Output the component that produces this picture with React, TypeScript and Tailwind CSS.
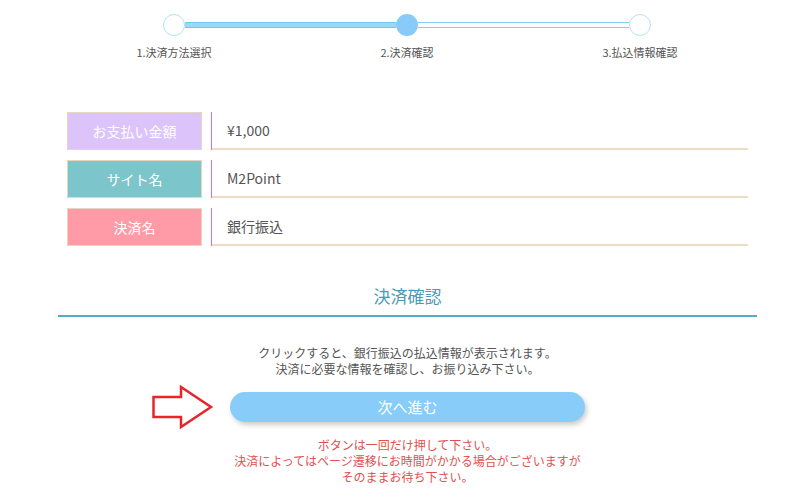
import React from 'react';

const FONT = { fontFamily: '"Noto Sans CJK JP", "Noto Sans", sans-serif' };

const ROWS = [
  { label: 'お支払い金額', value: '¥1,000', color: 'bg-[#dcc4fb]' },
  { label: 'サイト名', value: 'M2Point', color: 'bg-[#7cc5cb]' },
  { label: '決済名', value: '銀行振込', color: 'bg-[#fe9ba7]' },
];

function StepBar() {
  return (
    <div className="pt-[14px]">
      <div className="ml-[163px] flex w-[488px] items-center">
        <div className="h-[22px] w-[22px] shrink-0 rounded-full border border-[#b7e0f8] bg-white" />
        <div className="h-[6px] flex-1 border-y border-[#6ccaf2] bg-[#9ad8f8]" />
        <div className="h-[22px] w-[22px] shrink-0 rounded-full bg-[#88cbf8]" />
        <div className="h-[6px] flex-1 border-y border-[#7fd0f3] bg-white" />
        <div className="h-[22px] w-[22px] shrink-0 rounded-full border border-[#b7e0f8] bg-white" />
      </div>
      <div className="ml-[74px] mt-[9px] flex gap-[33px] text-[11px] leading-[14px] text-[#555]">
        <div className="w-[200px] text-center">1.決済方法選択</div>
        <div className="w-[200px] text-center">2.決済確認</div>
        <div className="w-[200px] text-center">3.払込情報確認</div>
      </div>
    </div>
  );
}

function Arrow() {
  return (
    <svg width="62" height="44" viewBox="0 0 62 44" className="shrink-0">
      <polygon
        points="1.5,12 29,12 29,2 59,22 29,42 29,32 1.5,32"
        fill="white"
        stroke="#e5262b"
        strokeWidth="2.5"
        strokeLinejoin="miter"
      />
    </svg>
  );
}

export default function App() {
  return (
    <div className="h-[502px] w-[800px] bg-white" style={FONT}>
      <StepBar />

      {/* Summary table */}
      <div className="ml-[67px] mt-[53px] flex w-[681px] flex-col gap-[10px]">
        {ROWS.map(row => (
          <div key={row.label} className="flex h-[38px]">
            <div className={`flex w-[135px] items-center justify-center border border-[#e8d5bf] text-[14px] text-white ${row.color}`}>
              {row.label}
            </div>
            <div className="ml-[9px] w-px bg-[#f06eaa]" />
            <div className="flex flex-1 flex-col">
              <div className="flex flex-1 items-center pl-[15px] text-[14px] text-[#555]">{row.value}</div>
              <div className="h-[2px] bg-[#ecdcc6]" />
            </div>
          </div>
        ))}
      </div>

      {/* Confirm section */}
      <div className="ml-[58px] mt-[37px] w-[699px]">
        <div className="pb-[6px] text-center text-[17px] leading-[26px] text-[#4a9bb6]">決済確認</div>
        <div className="h-[2px] bg-[#56abc6]" />
        <div className="mt-[28px] text-center text-[12px] leading-[16px] text-[#555]">
          <p>クリックすると、銀行振込の払込情報が表示されます。</p>
          <p>決済に必要な情報を確認し、お振り込み下さい。</p>
        </div>
      </div>

      <div className="ml-[152px] mt-[8px] flex items-center gap-[16px]">
        <Arrow />
        <button className="h-[30px] w-[355px] rounded-full bg-[#88cdf9] text-[15px] text-white shadow-[2px_3px_5px_rgba(0,0,0,0.2)]">
          次へ進む
        </button>
      </div>

      <div className="ml-[58px] mt-[8px] w-[699px] text-center text-[12px] leading-[16px] text-[#e0504f]">
        <p>ボタンは一回だけ押して下さい。</p>
        <p>決済によってはページ遷移にお時間がかかる場合がございますが</p>
        <p>そのままお待ち下さい。</p>
      </div>
    </div>
  );
}
